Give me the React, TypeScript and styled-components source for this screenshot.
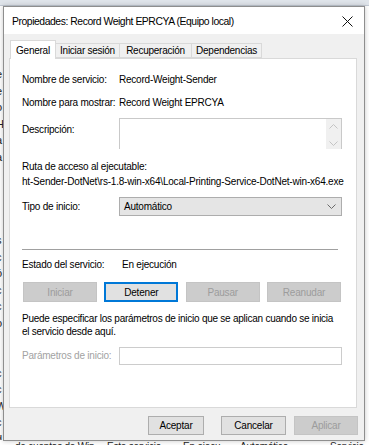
import React from "react";
import styled, { createGlobalStyle } from "styled-components";

const GlobalStyle = createGlobalStyle`
  html, body {
    margin: 0;
    padding: 0;
    background: #ffffff;
  }
  body {
    font-family: "Liberation Sans", Arial, sans-serif;
    color: #000000;
  }
`;

const Desktop = styled.div`
  position: relative;
  width: 369px;
  height: 445px;
  overflow: hidden;
  background: #ffffff;
`;

/* the services list that sits behind the dialog */
const Backdrop = styled.div`
  display: flex;
  flex-direction: column;
  height: 454px;
`;

const HeaderBand = styled.div`
  height: 5px;
  background: #dfe4ea;
  border-bottom: 1px solid #c3cad4;
`;

const BackList = styled.div`
  flex: 1;
  width: 3px;
  overflow: hidden;
  display: flex;
  flex-direction: column;
  padding-top: 60px;
`;

const BackRow = styled.div<{ $sel?: boolean }>`
  height: 16.6px;
  flex: none;
  line-height: 16px;
  font-size: 11px;
  white-space: nowrap;
  margin-left: -4px;
  color: ${(p) => (p.$sel ? "#1c3f94" : "#222222")};
`;

const BottomRow = styled.div`
  display: grid;
  grid-template-columns: 92px 76px 57px 90px 1fr;
  height: 14px;
  flex: none;
  line-height: 14px;
  font-size: 10px;
  letter-spacing: -0.2px;
  padding-left: 15px;
  white-space: nowrap;
  color: #222222;
`;

const Dialog = styled.div`
  position: absolute;
  left: 3px;
  top: 6px;
  width: 362px;
  height: 435px;
  box-sizing: border-box;
  border: 1px solid #8e8e8e;
  background: #f0f0f0;
  display: flex;
  flex-direction: column;
  box-shadow: 0 0 5px rgba(0, 0, 0, 0.22);
`;

const TitleBar = styled.div`
  height: 26px;
  flex: none;
  background: #ffffff;
  display: flex;
  align-items: center;
  justify-content: space-between;
  padding: 1px 11px 0 8px;
  font-size: 10.4px;
  letter-spacing: -0.45px;
`;

const CloseIcon = styled.svg`
  width: 11px;
  height: 11px;
`;

const TabStrip = styled.div`
  display: flex;
  align-items: flex-end;
  height: 18px;
  margin-top: 6px;
  padding-left: 6px;
  font-size: 10px;
  letter-spacing: -0.25px;
`;

const Tab = styled.div<{ $active?: boolean; $w: number }>`
  width: ${(p) => p.$w}px;
  box-sizing: border-box;
  height: ${(p) => (p.$active ? 19 : 15)}px;
  margin-bottom: ${(p) => (p.$active ? -1 : 0)}px;
  border: 1px solid #d9d9d9;
  border-bottom: ${(p) => (p.$active ? "none" : "1px solid #d9d9d9")};
  border-left: ${(p) => (p.$active ? "1px solid #d9d9d9" : "none")};
  background: ${(p) => (p.$active ? "#ffffff" : "#f0f0f0")};
  display: flex;
  align-items: center;
  justify-content: center;
  padding-top: ${(p) => (p.$active ? 1 : 0)}px;
  position: relative;
  z-index: ${(p) => (p.$active ? 1 : 0)};
`;

const Panel = styled.div`
  height: 350px;
  box-sizing: border-box;
  margin: 0 7px 0 5px;
  border: 1px solid #d9d9d9;
  background: #ffffff;
  padding: 14px 14px 0 12px;
  font-size: 10px;
  letter-spacing: -0.22px;
  display: flex;
  flex-direction: column;
`;

const Field = styled.div<{ $gap: number; $h?: number; $top?: boolean }>`
  display: grid;
  grid-template-columns: 97px 1fr;
  align-items: ${(p) => (p.$top ? "start" : "center")};
  margin-top: ${(p) => p.$gap}px;
  min-height: ${(p) => p.$h ?? 14}px;
  line-height: 14px;
`;

const Label = styled.span<{ $disabled?: boolean; $offset?: number }>`
  color: ${(p) => (p.$disabled ? "#a2a2a2" : "#000000")};
  margin-top: ${(p) => p.$offset ?? 0}px;
  white-space: nowrap;
`;

const Value = styled.span<{ $indent?: number }>`
  padding-left: ${(p) => p.$indent ?? 0}px;
  white-space: nowrap;
`;

const TextBox = styled.div`
  height: 31px;
  box-sizing: border-box;
  border: 1px solid #c9c9c9;
  border-bottom: none;
  display: flex;
  justify-content: flex-end;
  background: #ffffff;
`;

const ScrollStrip = styled.div`
  width: 15px;
  background: #f0f0f0;
  display: flex;
  flex-direction: column;
  justify-content: space-between;
  align-items: center;
  padding: 5px 0 3px;
`;

const Line = styled.div<{ $gap: number; $lh?: number; $track?: number }>`
  margin-top: ${(p) => p.$gap}px;
  line-height: ${(p) => p.$lh ?? 14}px;
  letter-spacing: ${(p) => p.$track ?? -0.22}px;
  white-space: nowrap;
`;

const Combo = styled.div`
  height: 19px;
  box-sizing: border-box;
  border: 1px solid #adadad;
  background: #e5e5e5;
  display: flex;
  align-items: center;
  justify-content: space-between;
  padding: 0 5px 0 4px;
`;

const Separator = styled.div`
  margin: 33px 4px 0 0;
  height: 1px;
  background: #a0a0a0;
`;

const ButtonRow = styled.div`
  display: grid;
  grid-template-columns: repeat(4, 74px);
  justify-content: space-between;
  margin: 10px 1px 0 1px;
`;

const Button = styled.div<{ $disabled?: boolean; $default?: boolean; $w?: number; $h?: number }>`
  width: ${(p) => (p.$w ? `${p.$w}px` : "auto")};
  height: ${(p) => p.$h ?? 20}px;
  box-sizing: border-box;
  display: flex;
  align-items: center;
  justify-content: center;
  background: ${(p) => (p.$disabled ? "#cccccc" : "#e1e1e1")};
  border: 1px solid ${(p) => (p.$disabled ? "#c4c4c4" : p.$default ? "#0078d7" : "#adadad")};
  box-shadow: ${(p) => (p.$default ? "inset 0 0 0 1px #0078d7" : "none")};
  color: ${(p) => (p.$disabled ? "#9c9c9c" : "#000000")};
  font-size: 10px;
  letter-spacing: -0.2px;
`;

const Param = styled.div`
  height: 18px;
  box-sizing: border-box;
  border: 1px solid #cccccc;
  background: #ffffff;
`;

const Footer = styled.div`
  display: flex;
  justify-content: flex-end;
  align-items: center;
  margin-top: 8px;
  padding-right: 6px;
`;

const Spacer = styled.div<{ $w: number }>`
  width: ${(p) => p.$w}px;
`;

const Chevron = ({ up, color }: { up?: boolean; color: string }) => (
  <svg width="9" height="5" viewBox="0 0 9 5">
    <polyline
      points={up ? "0.5,4.5 4.5,0.5 8.5,4.5" : "0.5,0.5 4.5,4.5 8.5,0.5"}
      fill="none"
      stroke={color}
      strokeWidth="1"
    />
  </svg>
);

const backRows = [
  "e", "e", "o", "H", "a", "a", "l", "l", "i", "r", "s", "c",
  "ó", "c", "c", "o", "i", ".", "c", "c", "W", "c", "d",
];

export default function App() {
  return (
    <Desktop>
      <GlobalStyle />
      <Backdrop>
        <HeaderBand />
        <BackList>
          {backRows.map((t, i) => (
            <BackRow key={i} $sel={i === 6 || i === 7}>
              {t}
            </BackRow>
          ))}
        </BackList>
        <BottomRow>
          <span>de cuentas de Win</span>
          <span>Este servicio</span>
          <span>En ejecu</span>
          <span>Automático</span>
          <span>Servicio</span>
        </BottomRow>
      </Backdrop>

      <Dialog>
        <TitleBar>
          <span>Propiedades: Record Weight EPRCYA (Equipo local)</span>
          <CloseIcon viewBox="0 0 11 11">
            <path d="M0.5 0.5 L10.5 10.5 M10.5 0.5 L0.5 10.5" stroke="#111" strokeWidth="1" />
          </CloseIcon>
        </TitleBar>

        <TabStrip>
          <Tab $active $w={46}>General</Tab>
          <Tab $w={64}>Iniciar sesión</Tab>
          <Tab $w={72}>Recuperación</Tab>
          <Tab $w={70}>Dependencias</Tab>
        </TabStrip>

        <Panel>
          <Field $gap={0}>
            <Label>Nombre de servicio:</Label>
            <Value>Record-Weight-Sender</Value>
          </Field>
          <Field $gap={9}>
            <Label>Nombre para mostrar:</Label>
            <Value>Record Weight EPRCYA</Value>
          </Field>
          <Field $gap={8} $h={31} $top>
            <Label $offset={5}>Descripción:</Label>
            <TextBox>
              <ScrollStrip>
                <Chevron up color="#c4c4c4" />
                <Chevron color="#c4c4c4" />
              </ScrollStrip>
            </TextBox>
          </Field>
          <Line $gap={11}>Ruta de acceso al ejecutable:</Line>
          <Line $gap={1} $track={-0.2}>
            ht-Sender-DotNet\rs-1.8-win-x64\Local-Printing-Service-DotNet-win-x64.exe
          </Line>
          <Field $gap={8} $h={19}>
            <Label>Tipo de inicio:</Label>
            <Combo>
              <span>Automático</span>
              <Chevron color="#6a6a6a" />
            </Combo>
          </Field>

          <Separator />

          <Field $gap={8}>
            <Label>Estado del servicio:</Label>
            <Value $indent={3}>En ejecución</Value>
          </Field>
          <ButtonRow>
            <Button $disabled>Iniciar</Button>
            <Button $default>Detener</Button>
            <Button $disabled>Pausar</Button>
            <Button $disabled>Reanudar</Button>
          </ButtonRow>

          <Line $gap={10} $lh={13} $track={-0.25}>
            Puede especificar los parámetros de inicio que se aplican cuando se inicia
            <br />
            el servicio desde aquí.
          </Line>
          <Field $gap={9} $h={18}>
            <Label $disabled>Parámetros de inicio:</Label>
            <Param />
          </Field>
        </Panel>

        <Footer>
          <Button $w={56} $h={19}>Aceptar</Button>
          <Spacer $w={17} />
          <Button $w={65} $h={19}>Cancelar</Button>
          <Spacer $w={8} />
          <Button $w={64} $h={19} $disabled>Aplicar</Button>
        </Footer>
      </Dialog>
    </Desktop>
  );
}
